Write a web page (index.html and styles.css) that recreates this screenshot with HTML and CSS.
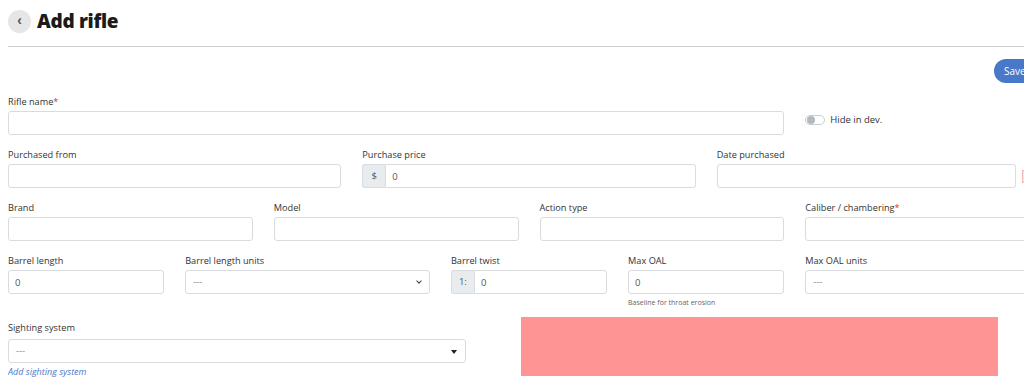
FILE: index.html
```html
<!DOCTYPE html>
<html>
<head>
    <link rel="stylesheet" href="styles.css">
</head>

<body>
    <div class="page-header">
        <button type="button" class="back-btn">&lsaquo;</button>
        <h1>Add rifle</h1>
    </div>
    <hr class="header-rule">

    <form id="rifleForm" class="rifle-form">
        <div class="toolbar">
            <button type="button" class="save-btn">Save</button>
        </div>

        <div class="form-row">
            <div class="field span-9">
                <label for="rifleName">Rifle name<span class="req">*</span></label>
                <input type="text" id="rifleName">
            </div>
            <div class="field span-3 toggle-field">
                <span class="toggle"><span class="knob"></span></span>
                <span class="toggle-label">Hide in dev.</span>
            </div>
        </div>

        <div class="form-row">
            <div class="field span-4">
                <label for="purchasedFrom">Purchased from</label>
                <input type="text" id="purchasedFrom">
            </div>
            <div class="field span-4">
                <label for="purchasePrice">Purchase price</label>
                <div class="input-group">
                    <span class="addon">$</span>
                    <input type="text" id="purchasePrice" value="0">
                </div>
            </div>
            <div class="field span-4">
                <label for="datePurchased">Date purchased</label>
                <div class="date-group">
                    <input type="text" id="datePurchased">
                    <span class="clear-mark"></span>
                </div>
            </div>
        </div>

        <div class="form-row">
            <div class="field span-3">
                <label for="brand">Brand</label>
                <input type="text" id="brand">
            </div>
            <div class="field span-3">
                <label for="model">Model</label>
                <input type="text" id="model">
            </div>
            <div class="field span-3">
                <label for="actionType">Action type</label>
                <input type="text" id="actionType">
            </div>
            <div class="field span-3">
                <label for="caliber">Caliber / chambering<span class="req">*</span></label>
                <input type="text" id="caliber">
            </div>
        </div>

        <div class="form-row">
            <div class="field span-2">
                <label for="barrelLength">Barrel length</label>
                <input type="text" id="barrelLength" value="0">
            </div>
            <div class="field span-3">
                <label for="barrelUnits">Barrel length units</label>
                <div class="select chevron">---</div>
            </div>
            <div class="field span-2">
                <label for="barrelTwist">Barrel twist</label>
                <div class="input-group">
                    <span class="addon">1:</span>
                    <input type="text" id="barrelTwist" value="0">
                </div>
            </div>
            <div class="field span-2">
                <label for="maxOal">Max OAL</label>
                <input type="text" id="maxOal" value="0">
                <div class="help">Baseline for throat erosion</div>
            </div>
            <div class="field span-3">
                <label for="maxOalUnits">Max OAL units</label>
                <div class="select wide">---</div>
            </div>
        </div>

        <div class="form-row last-row">
            <div class="field sighting">
                <label>Sighting system</label>
                <div class="select caret">---</div>
                <a href="#" class="add-link">Add sighting system</a>
            </div>
            <div class="notice-box"></div>
        </div>
    </form>
</body>
</html>
```

FILE: styles.css
```css
html {
    overflow-x: hidden;
}

body {
    font-family: "Open Sans", "Noto Sans", sans-serif;
    color: #333;
    width: 1042px;
}

.page-header {
    display: flex;
    align-items: center;
    gap: 6px;
    height: 24px;
    padding-top: 1px;
}

.back-btn {
    width: 23px;
    height: 23px;
    border: none;
    border-radius: 50%;
    background-color: #e6e6e6;
    color: #555;
    font-size: 14px;
    line-height: 20px;
    padding: 0 0 2px 0;
    font-weight: bold;
}

.page-header h1 {
    margin: 0;
    font-size: 19px;
    font-weight: 800;
    color: #1b1b1b;
    letter-spacing: -0.3px;
}

.header-rule {
    border: none;
    border-top: 1px solid #cfcfcf;
    margin: 13px 0 0 0;
    width: 1100px;
}

.toolbar {
    display: flex;
    justify-content: flex-end;
    margin-top: 12px;
    margin-bottom: 12px;
}

.save-btn {
    height: 24px;
    width: 56px;
    border: none;
    border-radius: 12px;
    background-color: #4a78c8;
    color: white;
    font-family: inherit;
    font-size: 10px;
    text-align: left;
    padding-left: 10px;
}

.form-row {
    display: grid;
    grid-template-columns: repeat(12, 1fr);
    column-gap: 21px;
    margin-bottom: 13px;
}

.span-2 { grid-column: span 2; }
.span-3 { grid-column: span 3; }
.span-4 { grid-column: span 4; }
.span-9 { grid-column: span 9; }

.field label {
    display: block;
    font-size: 9.2px;
    line-height: 13px;
    margin-bottom: 3px;
    color: #333;
}

.req {
    color: #e03030;
}

.field input,
.select {
    display: block;
    width: 100%;
    height: 24px;
    box-sizing: border-box;
    border: 1px solid #d8dce1;
    border-radius: 3px;
    padding: 0 6px;
    font-family: inherit;
    font-size: 9.5px;
    color: #555;
    background: white;
}

.select {
    line-height: 22px;
    color: #888;
    position: relative;
    padding-left: 7px;
}

.select.chevron::after {
    content: "";
    position: absolute;
    right: 8px;
    top: 8px;
    width: 3px;
    height: 3px;
    border-right: 1.2px solid #444;
    border-bottom: 1.2px solid #444;
    transform: rotate(45deg);
}

.select.caret::after {
    content: "";
    position: absolute;
    right: 8px;
    top: 10px;
    border-left: 3.5px solid transparent;
    border-right: 3.5px solid transparent;
    border-top: 4px solid #222;
}

.input-group {
    display: flex;
}

.input-group .addon {
    width: 23px;
    flex: none;
    height: 24px;
    box-sizing: border-box;
    background-color: #e9ecef;
    border: 1px solid #d8dce1;
    border-right: none;
    border-radius: 3px 0 0 3px;
    font-size: 9.5px;
    line-height: 22px;
    text-align: center;
    color: #555;
}

.input-group input {
    border-radius: 0 3px 3px 0;
}

.date-group {
    display: flex;
    align-items: center;
    gap: 6px;
}

.date-group input {
    width: 299px;
    flex: none;
}

.clear-mark {
    width: 3px;
    height: 11px;
    border: 1px solid #f3b7b7;
    border-right: none;
    background: #fbe3e3;
}

.toggle-field {
    display: flex;
    align-items: center;
    gap: 5px;
    padding-top: 18px;
    align-self: start;
}

.toggle {
    width: 20px;
    height: 10px;
    box-sizing: border-box;
    border: 1px solid #c9ced4;
    border-radius: 6px;
    display: flex;
    align-items: center;
    padding-left: 1px;
}

.toggle .knob {
    width: 8px;
    height: 8px;
    border-radius: 50%;
    background: #b3b8be;
}

.toggle-label {
    font-size: 9.5px;
    color: #333;
}

.help {
    font-size: 7px;
    line-height: 10px;
    margin-top: 4px;
    color: #666;
}

.last-row {
    display: flex;
    column-gap: 55px;
    align-items: flex-start;
}

.sighting {
    width: 458px;
}

.sighting label {
    margin-bottom: 5px;
}

.add-link {
    display: block;
    margin-top: 2px;
    font-size: 9px;
    font-style: italic;
    color: #4a78c8;
    text-decoration: none;
}

.notice-box {
    width: 477px;
    height: 59px;
    margin-top: -4px;
    background-color: #ff9494;
}
```
